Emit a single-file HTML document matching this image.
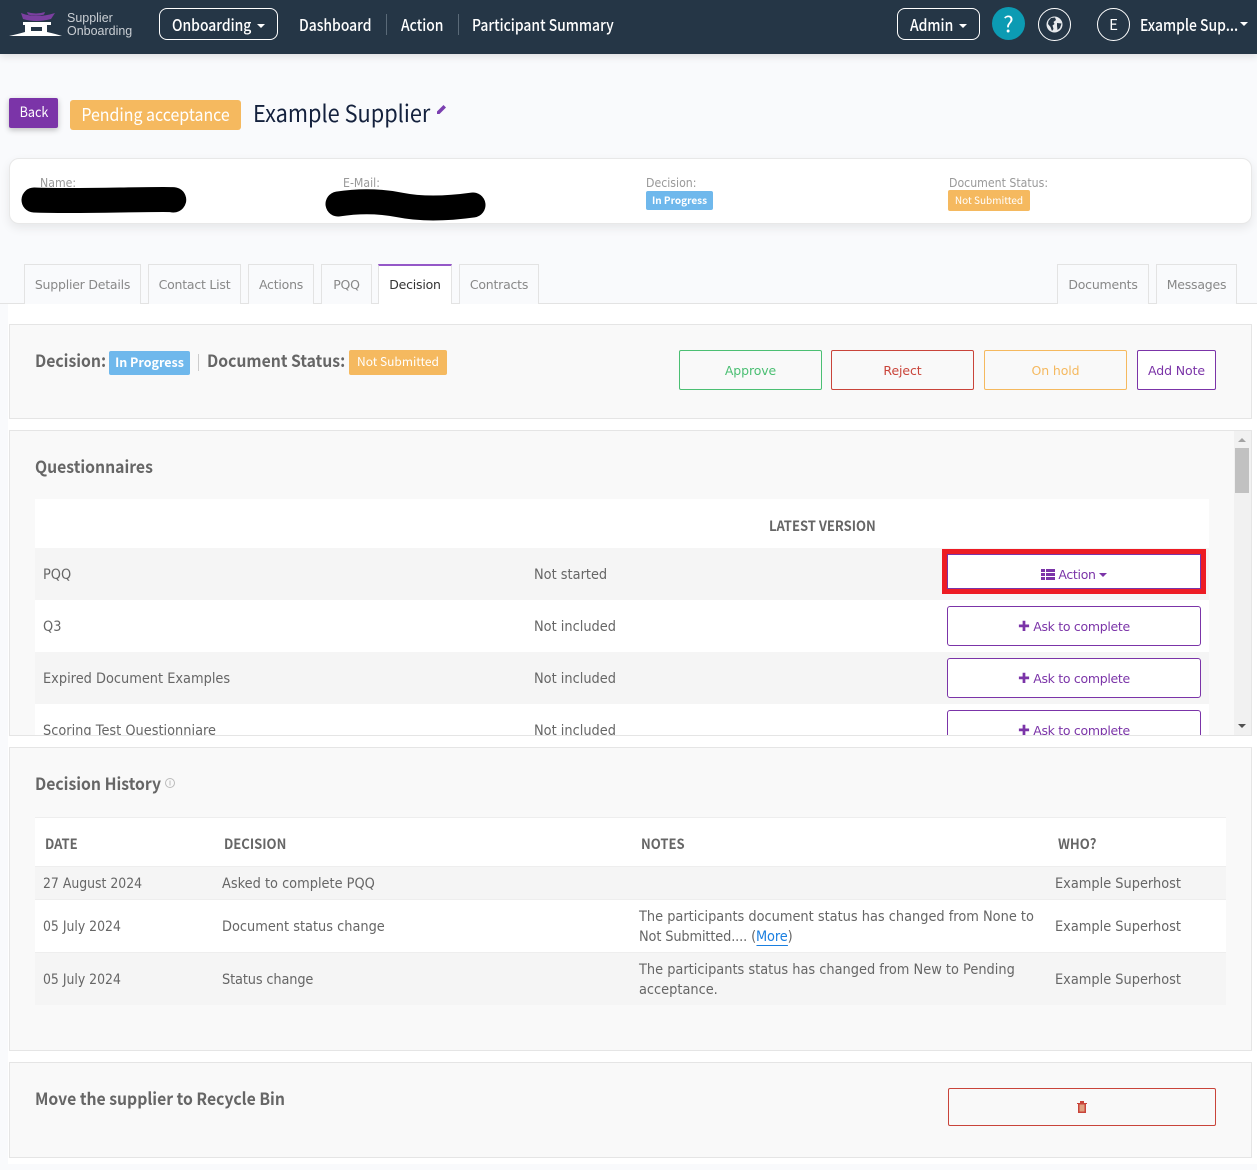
<!DOCTYPE html>
<html><head><meta charset="utf-8"><title>Supplier Onboarding</title>
<style>
html,body{margin:0;padding:0}
body{width:1257px;height:1170px;overflow:hidden;position:relative;background:#f9fafc;font-family:"DejaVu Sans","Liberation Sans",sans-serif;font-size:14px;color:#666}
div,span.t,a.t{position:absolute;box-sizing:border-box}
.t{white-space:nowrap;line-height:20px;height:20px;transform:scaleX(.925);transform-origin:left center}
.d{transform:scaleX(.89)}
.n{font-family:"Noto Sans CJK JP","Liberation Sans",sans-serif;color:#fff;font-size:16px;font-weight:500;transform:scaleX(.87)}
.b{font-family:"Noto Sans CJK JP","Liberation Sans",sans-serif;font-weight:700;color:#666;font-size:17px;transform:scaleX(.926)}
.th{font-family:"Noto Sans CJK JP","Liberation Sans",sans-serif;font-weight:700;color:#666;font-size:14px;transform:scaleX(.93)}
.tab{top:264px;height:40px;border:1px solid #e3e3e3;border-bottom:0;text-align:center;line-height:40px;font-size:12.5px;color:#888;background:#f9fafc;letter-spacing:-.22px}
.panel{left:9px;width:1243px;background:#f9f9f9;border:1px solid #e5e5e5}
.btn{border:1px solid;border-radius:2px;text-align:center;font-size:12.5px;letter-spacing:-.1px}
.pb{left:947px;width:254px;height:40px;line-height:40px;border:1px solid #7b34a8;border-radius:3px;color:#7b34a8;background:#fff;text-align:center;font-size:12.5px;letter-spacing:-.3px}
.badge{color:#fff;text-align:center;border-radius:2px;font-family:"Noto Sans CJK JP","Liberation Sans",sans-serif}
.c{width:0;height:0;border-left:4px solid transparent;border-right:4px solid transparent;border-top:4px solid #fff}
.lab{color:#999;font-size:12px;transform:scaleX(.915)}
.sep{background:#5a6a78;width:1px}
.sq{display:inline-block}
</style></head><body>

<div style="left:0;top:0;width:1257px;height:54px;background:#253646;box-shadow:0 2px 8px rgba(0,0,0,.12)"></div>

<svg style="position:absolute;left:8px;top:10px" width="56" height="27" viewBox="0 0 56 27">
<path d="M19 2 Q28 5 37 2 L36 4.5 Q28 7 20 4.5 Z" fill="#7b3fa0"/>
<path d="M13 3 Q28 9 47 3 L43 9 Q28 13 15 9 Z" fill="#7b3fa0"/>
<path d="M15 12 H43 V15 H39 V22 Q48 24 54 26 H1 Q10 24 17 22 V15 H15 Z M23 17 V21 H34 V17 Z" fill="#fff" fill-rule="evenodd"/>
</svg>
<span class="t" style="left:67px;top:8px;font-family:'Liberation Sans',sans-serif;font-size:13px;color:#c9ced3;transform:scaleX(.96)">Supplier</span>
<span class="t" style="left:67px;top:21px;font-family:'Liberation Sans',sans-serif;font-size:13px;color:#c9ced3;transform:scaleX(.96)">Onboarding</span>

<div style="left:159px;top:8px;width:119px;height:32px;border:1px solid #fff;border-radius:8px"></div>
<span class="t n" style="left:172px;top:14px">Onboarding</span>
<div class="c" style="left:257px;top:24px"></div>
<span class="t n" style="left:299px;top:14px">Dashboard</span>
<div class="sep" style="left:386px;top:14px;height:21px"></div>
<span class="t n" style="left:401px;top:14px">Action</span>
<div class="sep" style="left:458px;top:14px;height:21px"></div>
<span class="t n" style="left:472px;top:14px">Participant Summary</span>

<div style="left:897px;top:8px;width:83px;height:32px;border:1px solid #fff;border-radius:8px"></div>
<span class="t n" style="left:910px;top:14px">Admin</span>
<div class="c" style="left:959px;top:24px"></div>
<div style="left:992px;top:7px;width:33px;height:33px;border-radius:50%;background:#0c9bb3;color:#fff;text-align:center;line-height:33px;font-size:22px;font-family:'Noto Sans CJK JP',sans-serif;font-weight:400">?</div>
<div style="left:1038px;top:8px;width:33px;height:33px;border-radius:50%;border:1px solid #fff"></div>
<svg style="position:absolute;left:1046px;top:16px" width="17" height="17" viewBox="0 0 17 17"><circle cx="8.5" cy="8.5" r="8" fill="#e8ebee"/><path d="M5 2 L9 1.5 L10 4 L7.5 6 L8.5 8 L6.5 9.5 L7.5 13 L6 15 L4.5 11 L2 8 L2.5 5 Z M11 7 L15.5 7.5 L14 12 L11.5 14 L11 10 Z" fill="#253646"/></svg>
<div style="left:1097px;top:8px;width:33px;height:33px;border-radius:50%;border:1px solid #fff;color:#fff;text-align:center;line-height:31px;font-size:15px;font-family:'Noto Sans CJK JP',sans-serif">E</div>
<span class="t n" style="left:1140px;top:14px">Example Sup...</span>
<div class="c" style="left:1240px;top:22px"></div>

<!-- Title row -->
<div style="left:9px;top:98px;width:49px;height:30px;background:#7b34a8;border-radius:2px;color:#fff;text-align:center;line-height:28px;font-size:14px;font-family:'Noto Sans CJK JP',sans-serif;box-shadow:0 2px 6px rgba(0,0,0,.25)"><span class="sq" style="transform:scaleX(.9)">Back</span></div>
<div style="left:70px;top:100px;width:171px;height:30px;background:#f5b95f;border-radius:3px;color:#fff;text-align:center;line-height:29px;font-size:17.5px;font-family:'Noto Sans CJK JP',sans-serif"><span class="sq" style="transform:scaleX(.91)">Pending acceptance</span></div>
<span class="t" style="left:253px;top:100px;height:24px;line-height:24px;font-family:'Noto Sans CJK JP',sans-serif;font-size:23.5px;color:#14213d">Example Supplier</span>
<svg style="position:absolute;left:436px;top:104px" width="11" height="11" viewBox="0 0 11 11"><path d="M7.5 1 L10 3.5 L3.5 10 L1 10 L1 7.5 Z" fill="#7b3fb0"/></svg>

<!-- Info card -->
<div style="left:9px;top:158px;width:1243px;height:66px;background:#fff;border:1px solid #e8e8e8;border-radius:10px;box-shadow:0 4px 10px rgba(0,0,0,.08)"></div>
<span class="t lab" style="left:40px;top:173px">Name:</span>
<span class="t lab" style="left:343px;top:173px">E-Mail:</span>
<span class="t lab" style="left:646px;top:173px">Decision:</span>
<span class="t lab" style="left:949px;top:173px">Document Status:</span>
<svg style="position:absolute;left:0;top:181px" width="520" height="45"><path d="M34 19 Q60 20 120 19 T173 19" stroke="#000" stroke-width="25" stroke-linecap="round" fill="none"/><path d="M338 23 Q370 18 400 24 T473 24" stroke="#000" stroke-width="25" stroke-linecap="round" fill="none"/></svg>
<div class="badge" style="left:646px;top:191px;width:67px;height:19px;background:#6fb8ec;font-size:10px;font-weight:700;line-height:18px">In Progress</div>
<div class="badge" style="left:948px;top:190px;width:82px;height:21px;background:#f5b95f;font-size:10px;line-height:20px">Not Submitted</div>

<!-- Tabs + content bg -->
<div style="left:8px;top:304px;width:1249px;height:860px;background:#fff"></div>
<div style="left:0;top:303px;width:1257px;height:1px;background:#e3e3e3"></div>
<div class="tab" style="left:24px;width:117px">Supplier Details</div>
<div class="tab" style="left:148px;width:93px">Contact List</div>
<div class="tab" style="left:248px;width:66px">Actions</div>
<div class="tab" style="left:321px;width:51px">PQQ</div>
<div class="tab" style="left:378px;width:74px;height:40px;background:#fff;color:#333;border-top:2px solid #9558c8;line-height:38px">Decision</div>
<div class="tab" style="left:459px;width:80px">Contracts</div>
<div class="tab" style="left:1057px;width:92px">Documents</div>
<div class="tab" style="left:1156px;width:81px">Messages</div>

<!-- Decision panel -->
<div class="panel" style="top:324px;height:95px"></div>
<span class="t b" style="left:35px;top:350px">Decision:</span>
<div class="badge" style="left:109px;top:351px;width:81px;height:24px;background:#6fb8ec;font-size:12.5px;font-weight:700;line-height:22px">In Progress</div>
<div style="left:198px;top:354px;width:1px;height:17px;background:#ccc"></div>
<span class="t b" style="left:207px;top:350px">Document Status:</span>
<div class="badge" style="left:349px;top:350px;width:98px;height:25px;background:#f5b95f;font-size:12px;line-height:23px">Not Submitted</div>
<div class="btn" style="left:679px;top:350px;width:143px;height:40px;line-height:40px;border-color:#4bbf73;color:#4bbf73">Approve</div>
<div class="btn" style="left:831px;top:350px;width:143px;height:40px;line-height:40px;border-color:#c9443a;color:#c9443a">Reject</div>
<div class="btn" style="left:984px;top:350px;width:143px;height:40px;line-height:40px;border-color:#f5b95f;color:#f5b95f">On hold</div>
<div class="btn" style="left:1137px;top:350px;width:79px;height:40px;line-height:40px;border-color:#7b34a8;color:#7b34a8;background:#fff">Add Note</div>

<!-- Questionnaires -->
<div class="panel" style="top:430px;height:306px;overflow:hidden">
 <div style="left:25px;top:68px;width:1174px;height:49px;background:#fff"></div>
 <div style="left:25px;top:117px;width:1174px;height:52px;background:#f5f5f5"></div>
 <div style="left:25px;top:169px;width:1174px;height:52px;background:#fff"></div>
 <div style="left:25px;top:221px;width:1174px;height:52px;background:#f5f5f5"></div>
 <div style="left:25px;top:273px;width:1174px;height:40px;background:#fff"></div>
 <div style="left:1224px;top:0;width:17px;height:304px;background:#f1f1f1"></div>
 <div style="left:1225px;top:17px;width:14px;height:45px;background:#c1c1c1"></div>
 <div style="left:1228px;top:7px;width:0;height:0;border-left:4px solid transparent;border-right:4px solid transparent;border-bottom:4px solid #a3a3a3"></div>
 <div style="left:1228px;top:293px;width:0;height:0;border-left:4px solid transparent;border-right:4px solid transparent;border-top:4px solid #505050"></div>
 <span class="t" style="left:33px;top:290px">Scoring Test Questionniare</span>
 <span class="t" style="left:524px;top:290px">Not included</span>
 <div class="pb" style="left:937px;top:279px"><span style="font-size:14px">✚</span> Ask to complete</div>
</div>
<span class="t b" style="left:35px;top:456px">Questionnaires</span>
<span class="t th" style="left:769px;top:516px">LATEST VERSION</span>
<span class="t" style="left:43px;top:565px">PQQ</span>
<span class="t" style="left:534px;top:565px">Not started</span>
<span class="t" style="left:43px;top:617px">Q3</span>
<span class="t" style="left:534px;top:617px">Not included</span>
<span class="t" style="left:43px;top:669px">Expired Document Examples</span>
<span class="t" style="left:534px;top:669px">Not included</span>

<div style="left:942px;top:549px;width:264px;height:45px;border:5px solid #ed1c24;background:#fff"></div>
<div style="left:947px;top:554px;width:254px;height:35px;border:1px solid #7b34a8;background:#fff;text-align:center;line-height:39px;color:#7b34a8;font-size:12.5px;letter-spacing:-.3px">
<svg width="14" height="11" viewBox="0 0 14 11" style="vertical-align:-1px"><path d="M0 0H4V3H0ZM5 0H14V3H5ZM0 4H4V7H0ZM5 4H14V7H5ZM0 8H4V11H0ZM5 8H14V11H5Z" fill="#7b34a8"/></svg> Action <span style="display:inline-block;width:0;height:0;border-left:4px solid transparent;border-right:4px solid transparent;border-top:4px solid #7b34a8;vertical-align:2px"></span></div>
<div class="pb" style="top:606px"><span style="font-size:14px">✚</span> Ask to complete</div>
<div class="pb" style="top:658px"><span style="font-size:14px">✚</span> Ask to complete</div>

<!-- Decision history -->
<div class="panel" style="top:747px;height:304px"></div>
<span class="t b" style="left:35px;top:773px">Decision History</span>
<svg style="position:absolute;left:165px;top:778px" width="10" height="10" viewBox="0 0 10 10"><circle cx="5" cy="5" r="4.5" fill="none" stroke="#bbb"/><path d="M5 2.5V7.5" stroke="#bbb"/></svg>
<div style="left:35px;top:817px;width:1191px;height:50px;background:#fff;border-top:1px solid #eee"></div>
<div style="left:35px;top:866px;width:1191px;height:34px;background:#f5f5f5;border-top:1px solid #eee;border-bottom:1px solid #eee"></div>
<div style="left:35px;top:900px;width:1191px;height:52px;background:#fff"></div>
<div style="left:35px;top:952px;width:1191px;height:53px;background:#f5f5f5;border-top:1px solid #eee"></div>
<span class="t th" style="left:45px;top:834px">DATE</span>
<span class="t th" style="left:224px;top:834px">DECISION</span>
<span class="t th" style="left:641px;top:834px">NOTES</span>
<span class="t th" style="left:1058px;top:834px">WHO?</span>
<span class="t d" style="left:43px;top:874px">27 August 2024</span>
<span class="t" style="left:222px;top:874px">Asked to complete PQQ</span>
<span class="t" style="left:1055px;top:874px">Example Superhost</span>
<span class="t d" style="left:43px;top:917px">05 July 2024</span>
<span class="t" style="left:222px;top:917px">Document status change</span>
<span class="t" style="left:639px;top:907px">The participants document status has changed from None to</span>
<span class="t" style="left:639px;top:927px;letter-spacing:-.15px">Not Submitted.... (<span style="color:#1a7fe0;border-bottom:1px solid #1a7fe0">More</span>)</span>
<span class="t" style="left:1055px;top:917px">Example Superhost</span>
<span class="t d" style="left:43px;top:970px">05 July 2024</span>
<span class="t" style="left:222px;top:970px;letter-spacing:-.15px">Status change</span>
<span class="t" style="left:639px;top:960px">The participants status has changed from New to Pending</span>
<span class="t" style="left:639px;top:980px">acceptance.</span>
<span class="t" style="left:1055px;top:970px">Example Superhost</span>

<!-- Recycle -->
<div class="panel" style="top:1062px;height:96px"></div>
<span class="t b" style="left:35px;top:1088px">Move the supplier to Recycle Bin</span>
<div style="left:948px;top:1088px;width:268px;height:38px;border:1px solid #c9443a;border-radius:2px"></div>
<svg style="position:absolute;left:1076px;top:1101px" width="12" height="12" viewBox="0 0 12 12"><path d="M1 2H11V3H10V12H2V3H1ZM4 0H8V2H4Z" fill="#c9443a"/><path d="M3.5 3.5H8.5V10.5H3.5Z" fill="#e0a080"/></svg>
<div style="left:0;top:1164px;width:1257px;height:6px;background:#f9fafc"></div>
</body></html>
